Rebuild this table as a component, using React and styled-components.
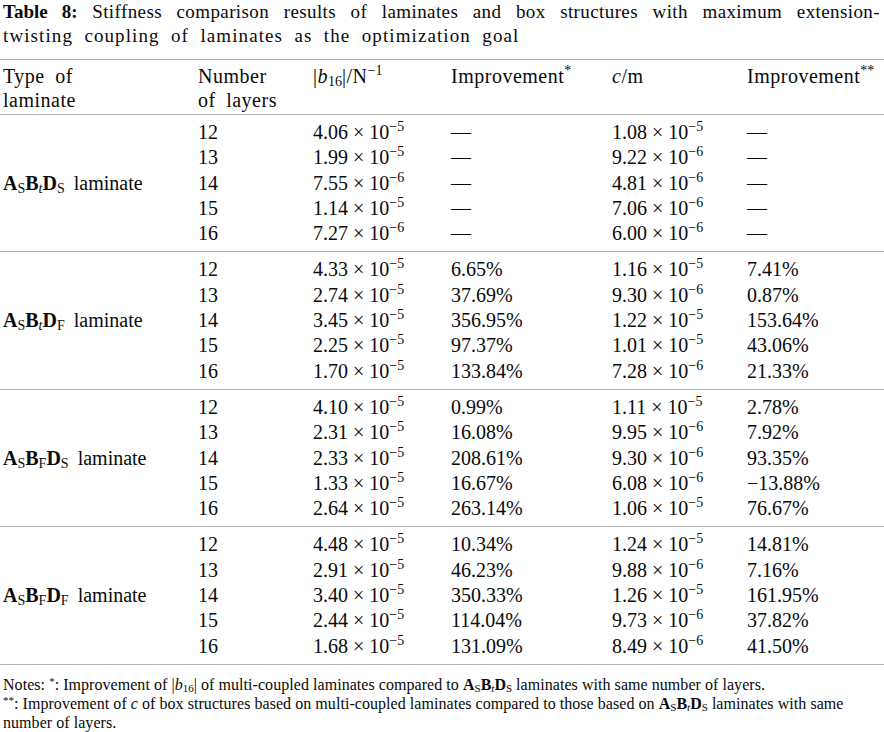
import React from "react";
import styled, { createGlobalStyle } from "styled-components";

const Global = createGlobalStyle`
  html, body { margin: 0; padding: 0; background: #fff; }
  body { font-family: "Liberation Serif", "Times New Roman", serif; color: #000; }
`;

const Page = styled.div`
  width: 884px;
  font-family: "Liberation Serif", "Times New Roman", serif;
  color: #0a0a0a;
`;

const Caption = styled.div`
  font-size: 19px;
  line-height: 24px;
  padding: 0 4px 0 3px;
  margin-bottom: 11px;
`;

const CaptionLine = styled.div`
  text-align: ${(p) => (p.$full ? "justify" : "left")};
  text-align-last: ${(p) => (p.$full ? "justify" : "left")};
  letter-spacing: ${(p) => (p.$full ? "0.4px" : "1.1px")};
  word-spacing: ${(p) => (p.$full ? "0" : "5.5px")};
`;

const Bold = styled.b`
  font-weight: bold;
  letter-spacing: 0;
  word-spacing: 0;
`;

const Table = styled.div`
  border-top: 1px solid #b0b0b0;
  border-bottom: 1px solid #b0b0b0;
`;

const cols = "195px 115px 138px 161px 135px 1fr";

const HeaderRow = styled.div`
  display: grid;
  grid-template-columns: ${cols};
  padding: 4px 0 2px 3px;
  font-size: 20px;
  line-height: 24px;
  letter-spacing: 0.5px;
  word-spacing: 5px;
  border-bottom: 1px solid #b0b0b0;
`;

const HeadCell = styled.div``;

const Group = styled.div`
  display: grid;
  grid-template-columns: ${cols};
  grid-auto-rows: 25.3px;
  padding: 5px 0 5px 3px;
  font-size: 20px;
  line-height: 25.3px;
  & + & {
    border-top: 1px solid #b0b0b0;
  }
`;

const LabelCell = styled.div`
  grid-column: 1;
  grid-row: 1 / span 5;
  align-self: center;
  white-space: nowrap;
`;

const Cell = styled.div`
  grid-column: ${(p) => p.$col};
  white-space: nowrap;
`;

const Sup = styled.sup`
  font-size: ${(p) => p.$size || 14}px;
  line-height: 0;
  vertical-align: ${(p) => p.$raise || 8}px;
  letter-spacing: 0;
`;

const Sub = styled.sub`
  font-size: ${(p) => p.$size || 14}px;
  line-height: 0;
  vertical-align: -${(p) => p.$drop || 3}px;
  font-style: ${(p) => (p.$italic ? "italic" : "normal")};
  font-weight: normal;
  letter-spacing: 0;
`;

const It = styled.i`
  font-style: italic;
`;

const Word = styled.span`
  margin-left: 9px;
`;

const Notes = styled.div`
  margin-top: 10px;
  padding-left: 3px;
  font-size: 16px;
  line-height: 19px;
  letter-spacing: 0.05px;
`;

const Sci = ({ m, e }) => (
  <>
    {m} × 10<Sup>−{e}</Sup>
  </>
);

const Lam = ({ b, d, size, drop }) => (
  <>
    <Bold>A</Bold>
    <Sub $size={size} $drop={drop}>S</Sub>
    <Bold>B</Bold>
    <Sub $size={size} $drop={drop} $italic={b === "t"}>{b}</Sub>
    <Bold>D</Bold>
    <Sub $size={size} $drop={drop}>{d}</Sub>
  </>
);

const groups = [
  {
    b: "t",
    d: "S",
    rows: [
      ["12", "4.06", "5", "—", "1.08", "5", "—"],
      ["13", "1.99", "5", "—", "9.22", "6", "—"],
      ["14", "7.55", "6", "—", "4.81", "6", "—"],
      ["15", "1.14", "5", "—", "7.06", "6", "—"],
      ["16", "7.27", "6", "—", "6.00", "6", "—"],
    ],
  },
  {
    b: "t",
    d: "F",
    rows: [
      ["12", "4.33", "5", "6.65%", "1.16", "5", "7.41%"],
      ["13", "2.74", "5", "37.69%", "9.30", "6", "0.87%"],
      ["14", "3.45", "5", "356.95%", "1.22", "5", "153.64%"],
      ["15", "2.25", "5", "97.37%", "1.01", "5", "43.06%"],
      ["16", "1.70", "5", "133.84%", "7.28", "6", "21.33%"],
    ],
  },
  {
    b: "F",
    d: "S",
    rows: [
      ["12", "4.10", "5", "0.99%", "1.11", "5", "2.78%"],
      ["13", "2.31", "5", "16.08%", "9.95", "6", "7.92%"],
      ["14", "2.33", "5", "208.61%", "9.30", "6", "93.35%"],
      ["15", "1.33", "5", "16.67%", "6.08", "6", "−13.88%"],
      ["16", "2.64", "5", "263.14%", "1.06", "5", "76.67%"],
    ],
  },
  {
    b: "F",
    d: "F",
    rows: [
      ["12", "4.48", "5", "10.34%", "1.24", "5", "14.81%"],
      ["13", "2.91", "5", "46.23%", "9.88", "6", "7.16%"],
      ["14", "3.40", "5", "350.33%", "1.26", "5", "161.95%"],
      ["15", "2.44", "5", "114.04%", "9.73", "6", "37.82%"],
      ["16", "1.68", "5", "131.09%", "8.49", "6", "41.50%"],
    ],
  },
];

export default function App() {
  return (
    <Page>
      <Global />
      <Caption>
        <CaptionLine $full>
          <Bold>Table 8:</Bold> Stiffness comparison results of laminates and box structures with maximum extension-
        </CaptionLine>
        <CaptionLine>twisting coupling of laminates as the optimization goal</CaptionLine>
      </Caption>
      <Table>
        <HeaderRow>
          <HeadCell>
            Type of
            <br />
            laminate
          </HeadCell>
          <HeadCell>
            Number
            <br />
            of layers
          </HeadCell>
          <HeadCell>
            |<It>b</It>
            <Sub>16</Sub>|/N<Sup>−1</Sup>
          </HeadCell>
          <HeadCell>
            Improvement<Sup>*</Sup>
          </HeadCell>
          <HeadCell>
            <It>c</It>/m
          </HeadCell>
          <HeadCell>
            Improvement<Sup>**</Sup>
          </HeadCell>
        </HeaderRow>
        {groups.map((g, gi) => (
          <Group key={gi}>
            <LabelCell>
              <Lam b={g.b} d={g.d} />
              <Word>laminate</Word>
            </LabelCell>
            {g.rows.map((r, ri) => (
              <React.Fragment key={ri}>
                <Cell $col={2}>{r[0]}</Cell>
                <Cell $col={3}>
                  <Sci m={r[1]} e={r[2]} />
                </Cell>
                <Cell $col={4}>{r[3]}</Cell>
                <Cell $col={5}>
                  <Sci m={r[4]} e={r[5]} />
                </Cell>
                <Cell $col={6}>{r[6]}</Cell>
              </React.Fragment>
            ))}
          </Group>
        ))}
      </Table>
      <Notes>
        Notes: <Sup $size={11} $raise={5}>*</Sup>: Improvement of |<It>b</It>
        <Sub $size={11} $drop={2}>16</Sub>| of multi-coupled laminates compared to{" "}
        <Lam b="t" d="S" size={11} drop={2} /> laminates with same number of layers.
        <br />
        <Sup $size={11} $raise={5}>**</Sup>: Improvement of <It>c</It> of box structures based on multi-coupled laminates compared to those based on{" "}
        <Lam b="t" d="S" size={11} drop={2} /> laminates with same
        <br />
        number of layers.
      </Notes>
    </Page>
  );
}
